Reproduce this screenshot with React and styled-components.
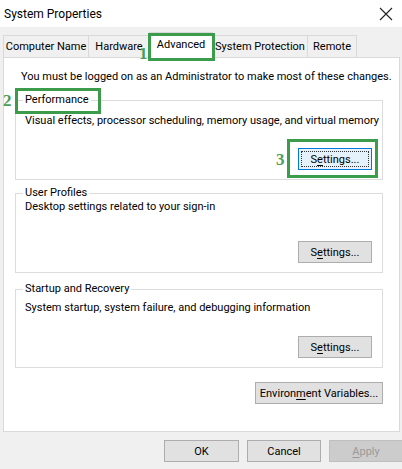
import React from 'react'
import styled, { createGlobalStyle } from 'styled-components'

const GlobalStyle = createGlobalStyle`
  html, body {
    margin: 0;
    padding: 0;
    background: #f0f0f0;
  }
  body {
    font-family: Roboto, 'Segoe UI', sans-serif;
    font-size: 11px;
    color: #000;
  }
`

const GREEN = '#3b9c4c'

const Dialog = styled.div`
  width: 402px;
  height: 469px;
  background: #f0f0f0;
  display: flex;
  flex-direction: column;
  position: relative;
  overflow: hidden;
`

const TitleBar = styled.div`
  height: 27px;
  background: #fff;
  display: flex;
  align-items: center;
  justify-content: space-between;
  padding: 0 0 0 4px;
  font-size: 12px;
`

const CloseBox = styled.div`
  width: 32px;
  height: 27px;
  display: flex;
  align-items: center;
  justify-content: center;
`

const TabStrip = styled.div`
  display: flex;
  align-items: flex-end;
  height: 30px;
  padding-left: 3px;
`

const Tab = styled.div`
  box-sizing: border-box;
  width: ${p => p.w}px;
  height: ${p => (p.active ? '26px' : '22px')};
  margin-bottom: ${p => (p.active ? '-1px' : '0')};
  padding-bottom: ${p => (p.active ? '3px' : '0')};
  background: ${p => (p.active ? '#fff' : '#f0f0f0')};
  border: 1px solid #d9d9d9;
  border-bottom: none;
  border-left: ${p => (p.first || p.active ? '1px solid #d9d9d9' : 'none')};
  border-right: ${p => (p.beforeActive ? 'none' : '1px solid #d9d9d9')};
  display: flex;
  align-items: center;
  justify-content: center;
  position: relative;
  z-index: ${p => (p.active ? 2 : 0)};
  white-space: nowrap;
`

const Panel = styled.div`
  margin: 0 2px 0 3px;
  height: 375px;
  box-sizing: border-box;
  background: #fff;
  border: 1px solid #d9d9d9;
  padding: 12px 16px 0 11px;
  display: flex;
  flex-direction: column;
  position: relative;
  z-index: 1;
`

const Notice = styled.div`
  padding-left: 6px;
  height: 14px;
  line-height: 14px;
  margin-bottom: 16px;
  white-space: nowrap;
`

const Group = styled.section`
  margin-bottom: ${p => p.gap}px;
  padding: 0 10px 9px 9px;
  border: 1px solid #dcdcdc;
  height: ${p => p.h}px;
  box-sizing: border-box;
  display: flex;
  flex-direction: column;
`

const Legend = styled.div`
  align-self: flex-start;
  margin-top: -8px;
  margin-left: -2px;
  padding: 0 2px;
  line-height: 14px;
  background: #fff;
`

const Desc = styled.div`
  margin-top: ${p => p.top}px;
  line-height: 14px;
  flex: 1;
  white-space: nowrap;
`

const ButtonRow = styled.div`
  display: flex;
  justify-content: flex-end;
`

const Button = styled.div`
  box-sizing: border-box;
  width: ${p => p.w || 74}px;
  height: 22px;
  flex-shrink: 0;
  display: flex;
  align-items: center;
  justify-content: center;
  background: ${p => (p.focused ? '#e5f1fb' : p.disabled ? '#cccccc' : '#e1e1e1')};
  border: 1px solid ${p => (p.focused ? '#0078d7' : p.disabled ? '#bfbfbf' : '#adadad')};
  color: ${p => (p.disabled ? '#9a9a9a' : '#000')};
  position: relative;
  white-space: nowrap;
  &::after {
    content: '';
    display: ${p => (p.focused ? 'block' : 'none')};
    position: absolute;
    inset: 2px;
    border: 1px dotted #333;
  }
  u {
    text-decoration-thickness: 1px;
    text-underline-offset: 2px;
  }
`

const EnvRow = styled.div`
  display: flex;
  justify-content: flex-end;
`

const Footer = styled.div`
  display: flex;
  justify-content: flex-end;
  gap: 8px;
  padding-top: 8px;
  margin-right: -1px;
`

const Mark = styled.div`
  position: absolute;
  border: 3px solid ${GREEN};
  box-sizing: border-box;
  pointer-events: none;
  z-index: 5;
`

const Num = styled.span`
  position: absolute;
  font-family: 'Liberation Serif', 'DejaVu Serif', serif;
  font-weight: bold;
  font-size: 17px;
  color: #4a9f55;
  z-index: 6;
  line-height: 1;
`

const Settings = ({ focused }) => (
  <ButtonRow>
    <Button focused={focused}>
      <span>S<u>e</u>ttings...</span>
    </Button>
  </ButtonRow>
)

export default function App () {
  return (
    <Dialog>
      <GlobalStyle />
      <TitleBar>
        <span>System Properties</span>
        <CloseBox>
          <svg width='14' height='14' viewBox='0 0 14 14'>
            <path d='M1 1 L13 13 M13 1 L1 13' stroke='#222' strokeWidth='1.1' fill='none' />
          </svg>
        </CloseBox>
      </TitleBar>
      <TabStrip>
        <Tab first w={86}>Computer Name</Tab>
        <Tab w={60} beforeActive>Hardware</Tab>
        <Tab active w={64}>Advanced</Tab>
        <Tab w={95}>System Protection</Tab>
        <Tab w={49}>Remote</Tab>
      </TabStrip>
      <Panel>
        <Notice>You must be logged on as an Administrator to make most of these changes.</Notice>
        <Group h={80} gap={13}>
          <Legend>Performance</Legend>
          <Desc top={7}>Visual effects, processor scheduling, memory usage, and virtual memory</Desc>
          <Settings focused />
        </Group>
        <Group h={80} gap={16}>
          <Legend>User Profiles</Legend>
          <Desc top={0}>Desktop settings related to your sign-in</Desc>
          <Settings />
        </Group>
        <Group h={79} gap={14}>
          <Legend>Startup and Recovery</Legend>
          <Desc top={5}>System startup, system failure, and debugging information</Desc>
          <Settings />
        </Group>
        <EnvRow>
          <Button w={128}>
            <span>Environ<u>m</u>ent Variables...</span>
          </Button>
        </EnvRow>
      </Panel>
      <Footer>
        <Button w={75}>OK</Button>
        <Button w={74}>Cancel</Button>
        <Button w={74} disabled><span><u>A</u>pply</span></Button>
      </Footer>

      <Mark style={{ left: 148, top: 33, width: 67, height: 28 }} />
      <Num style={{ left: 139, top: 45 }}>1</Num>
      <Mark style={{ left: 15, top: 88, width: 86, height: 26 }} />
      <Num style={{ left: 3, top: 92 }}>2</Num>
      <Mark style={{ left: 287, top: 139, width: 91, height: 39 }} />
      <Num style={{ left: 276, top: 151 }}>3</Num>
    </Dialog>
  )
}
